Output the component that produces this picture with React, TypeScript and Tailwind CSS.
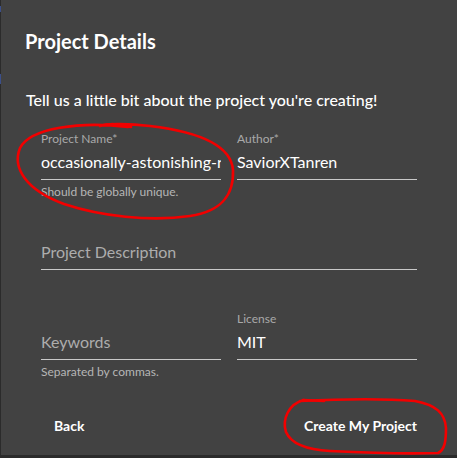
import React from "react";

const font = { fontFamily: "Lato, 'Noto Sans', sans-serif" };

function Field({
  label,
  value,
  placeholder,
  helper,
}: {
  label?: string;
  value?: string;
  placeholder?: string;
  helper?: string;
}) {
  return (
    <div className="flex flex-col min-w-0">
      <div className="h-4 text-xs leading-4 text-[#a9a9a9]">{label}</div>
      <div className="mt-[3px] border-b border-[#c9c9c9] pb-[5px]">
        <div className="h-6 overflow-hidden whitespace-nowrap text-base leading-6">
          {value ? (
            <span className="text-white">{value}</span>
          ) : (
            <span className="text-[#adadad]">{placeholder}</span>
          )}
        </div>
      </div>
      {helper && (
        <div className="mt-1 text-xs leading-4 text-[#b6b6b6]">{helper}</div>
      )}
    </div>
  );
}

export default function App() {
  return (
    <div
      className="relative flex h-[458px] w-[457px] overflow-hidden bg-[#2b2b2b]"
      style={font}
    >
      {/* strip of the page behind the dialog */}
      <div className="flex w-px flex-col">
        <div className="h-[6px]" />
        <div className="h-[6px] bg-[#3b4f8a]" />
        <div className="h-[62px]" />
        <div className="h-[10px] bg-[#3b4f8a]" />
      </div>

      <div className="mb-[3px] flex flex-1 flex-col bg-[#424242] pl-[24px] pr-[40px] pt-[25px]">
        <h2 className="text-xl font-bold leading-8 text-white">Project Details</h2>

        <p className="mt-[31px] pl-px text-base font-medium leading-6 text-white">
          Tell us a little bit about the project you're creating!
        </p>

        <div className="ml-4 mt-[19px] grid grid-cols-2 gap-x-4">
          <Field
            label="Project Name*"
            value="occasionally-astonishing-rabbit"
            helper="Should be globally unique."
          />
          <Field label="Author*" value="SaviorXTanren" />
        </div>

        <div className="ml-4 mt-[21px]">
          <Field placeholder="Project Description" />
        </div>

        <div className="ml-4 mt-[41px] grid grid-cols-2 gap-x-4">
          <Field placeholder="Keywords" helper="Separated by commas." />
          <Field label="License" value="MIT" />
        </div>

        <div className="mt-9 flex items-center justify-between">
          <button className="ml-[29px] text-sm font-bold leading-5 text-white">Back</button>
          <button className="text-sm font-bold leading-5 text-white">
            Create My Project
          </button>
        </div>
      </div>

      {/* red hand-drawn annotations */}
      <svg
        className="pointer-events-none absolute inset-0"
        width="457"
        height="458"
        viewBox="0 0 457 458"
        fill="none"
        stroke="#f20000"
        strokeWidth="2.6"
        strokeLinecap="round"
        strokeLinejoin="round"
      >
        <path d="M 128 127 C 80 121, 30 128, 20 148 C 12 168, 26 190, 64 204 C 100 216, 150 222, 190 216 C 222 211, 234 195, 233 170 C 231 145, 200 132, 150 126 C 125 123, 105 124, 100 126" />
        <path d="M 112 124 L 131 127" />
        <path d="M 304 400 C 288 404, 282 420, 286 432 C 292 446, 312 450, 330 451 C 370 453, 410 454, 438 453 C 445 450, 446 440, 446 428 C 445 413, 436 405, 415 401 C 380 398, 340 399, 300 401" />
        <path d="M 303 400 L 324 401" />
      </svg>
    </div>
  );
}
